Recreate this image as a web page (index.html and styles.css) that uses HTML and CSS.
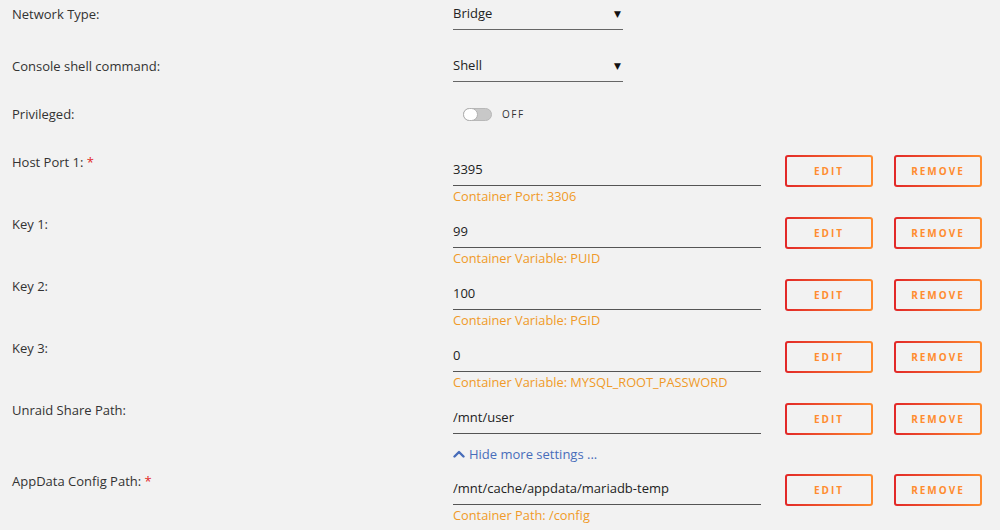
FILE: index.html
```html
<!DOCTYPE html>
<html lang="en">

<head>
    <meta charset="UTF-8">
    <meta name="viewport" content="width=device-width, initial-scale=1.0">
    <title>Add Container</title>
    <link rel="stylesheet" href="styles.css">
</head>

<body>
    <div class="form">

        <div class="row row-select">
            <div class="label">Network Type:</div>
            <div class="select"><span>Bridge</span><span class="caret">&#9660;</span></div>
        </div>

        <div class="row row-select">
            <div class="label">Console shell command:</div>
            <div class="select"><span>Shell</span><span class="caret">&#9660;</span></div>
        </div>

        <div class="row row-switch">
            <div class="label">Privileged:</div>
            <div class="switch">
                <span class="track"><span class="knob"></span></span>
                <span class="switch-text">OFF</span>
            </div>
        </div>

        <div class="row row-config">
            <div class="label">Host Port 1: <span class="req">*</span></div>
            <div class="field">
                <input class="input" type="text" value="3395">
                <div class="hint">Container Port: 3306</div>
            </div>
            <button class="btn">EDIT</button>
            <button class="btn">REMOVE</button>
        </div>

        <div class="row row-config">
            <div class="label">Key 1:</div>
            <div class="field">
                <input class="input" type="text" value="99">
                <div class="hint">Container Variable: PUID</div>
            </div>
            <button class="btn">EDIT</button>
            <button class="btn">REMOVE</button>
        </div>

        <div class="row row-config">
            <div class="label">Key 2:</div>
            <div class="field">
                <input class="input" type="text" value="100">
                <div class="hint">Container Variable: PGID</div>
            </div>
            <button class="btn">EDIT</button>
            <button class="btn">REMOVE</button>
        </div>

        <div class="row row-config">
            <div class="label">Key 3:</div>
            <div class="field">
                <input class="input" type="text" value="0">
                <div class="hint">Container Variable: MYSQL_ROOT_PASSWORD</div>
            </div>
            <button class="btn">EDIT</button>
            <button class="btn">REMOVE</button>
        </div>

        <div class="row row-config no-hint">
            <div class="label">Unraid Share Path:</div>
            <div class="field">
                <input class="input" type="text" value="/mnt/user">
            </div>
            <button class="btn">EDIT</button>
            <button class="btn">REMOVE</button>
        </div>

        <div class="row row-toggle">
            <a class="more" href="#">
                <svg class="chevron" width="12" height="8" viewBox="0 0 12 8">
                    <path d="M1.5 6.5 L6 2 L10.5 6.5" fill="none" stroke="currentColor" stroke-width="2.4" stroke-linecap="round" stroke-linejoin="round"/>
                </svg>
                Hide more settings ...
            </a>
        </div>

        <div class="row row-config">
            <div class="label">AppData Config Path: <span class="req">*</span></div>
            <div class="field">
                <input class="input" type="text" value="/mnt/cache/appdata/mariadb-temp">
                <div class="hint">Container Path: /config</div>
            </div>
            <button class="btn">EDIT</button>
            <button class="btn">REMOVE</button>
        </div>

    </div>
</body>

</html>
```

FILE: styles.css
```css
body {
    margin: 0;
    background: #f2f2f2;
    font-family: "Open Sans", "DejaVu Sans", sans-serif;
    color: #333;
    overflow: hidden;
}

.form {
    padding-left: 12px;
}

.row {
    display: flex;
}

.label {
    width: 441px;
    flex-shrink: 0;
    font-size: 13px;
    line-height: 20px;
    color: #333;
}

.req {
    color: #e22828;
}

/* dropdown rows */
.row-select {
    align-items: center;
    height: 30px;
    margin-bottom: 22px;
}

.row-select .label {
    margin-top: -2px;
}

.select {
    width: 170px;
    height: 29px;
    box-sizing: border-box;
    padding-bottom: 3px;
    border-bottom: 1px solid #666;
    display: flex;
    align-items: center;
    justify-content: space-between;
    font-size: 13px;
    color: #222;
}

.caret {
    font-size: 9px;
    margin-right: 2px;
    color: #111;
}

/* privileged switch */
.row-switch {
    align-items: center;
    height: 20px;
    margin-top: 21px;
    margin-bottom: 29px;
}

.row-switch .label {
    margin-top: -1px;
}

.switch {
    display: flex;
    align-items: center;
    margin-left: 10px;
}

.track {
    display: block;
    width: 29px;
    height: 13px;
    border-radius: 7px;
    background: #c8c8c8;
    border: 1px solid #b8b8b8;
    position: relative;
    box-sizing: border-box;
}

.knob {
    position: absolute;
    left: -1px;
    top: -1px;
    width: 15px;
    height: 13px;
    border-radius: 7px;
    background: #fff;
    border: 1px solid #b0b0b0;
    box-sizing: border-box;
}

.switch-text {
    margin-left: 10px;
    font-size: 10px;
    letter-spacing: 1.5px;
    color: #333;
}

/* port / variable / path rows */
.row-config {
    align-items: flex-start;
    height: 55px;
    margin-bottom: 7px;
}

.row-config .label {
    margin-top: -1px;
}

.row-config.no-hint {
    height: 33px;
    margin-bottom: 10px;
}

.field {
    width: 308px;
    margin-top: 3px;
}

.input {
    display: block;
    width: 100%;
    height: 30px;
    box-sizing: border-box;
    padding: 0 0 3px;
    border: 0;
    border-bottom: 1px solid #555;
    background: transparent;
    font-family: inherit;
    font-size: 13px;
    color: #222;
    outline: none;
}

.hint {
    font-size: 12.8px;
    line-height: 22px;
    margin-top: -1px;
    color: #f09a28;
}

.btn {
    width: 88px;
    height: 32px;
    margin-top: 2px;
    margin-left: 21px;
    border: 2px solid transparent;
    border-radius: 3px;
    background: linear-gradient(#f2f2f2, #f2f2f2) padding-box,
                linear-gradient(90deg, #e22828, #ff8c2f) border-box;
    font-family: inherit;
    font-size: 10px;
    font-weight: 700;
    letter-spacing: 2px;
    color: #ff8c2f;
    cursor: pointer;
    padding: 0;
}

.field + .btn {
    margin-left: 24px;
}

/* show / hide extra settings */
.row-toggle {
    height: 20px;
    margin-bottom: 8px;
    padding-left: 441px;
}

.more {
    display: flex;
    align-items: center;
    font-size: 13px;
    line-height: 20px;
    color: #486dba;
    text-decoration: none;
}

.chevron {
    margin-right: 4px;
}
```
